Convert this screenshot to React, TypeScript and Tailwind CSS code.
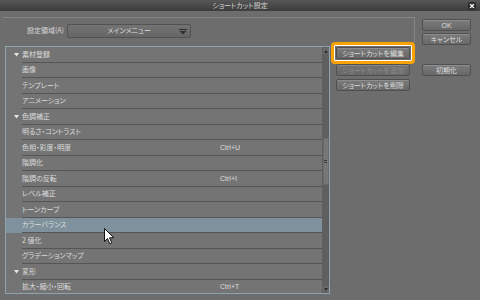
import React from 'react';

interface Row {
  label: string;
  header?: boolean;
  shortcut?: string;
  selected?: boolean;
}

const rows: Row[] = [
  { label: '素材登録', header: true },
  { label: '画像' },
  { label: 'テンプレート' },
  { label: 'アニメーション' },
  { label: '色調補正', header: true },
  { label: '明るさ・コントラスト' },
  { label: '色相・彩度・明度', shortcut: 'Ctrl+U' },
  { label: '階調化' },
  { label: '階調の反転', shortcut: 'Ctrl+I' },
  { label: 'レベル補正' },
  { label: 'トーンカーブ' },
  { label: 'カラーバランス', selected: true },
  { label: '2 値化' },
  { label: 'グラデーションマップ' },
  { label: '変形', header: true },
  { label: '拡大・縮小・回転', shortcut: 'Ctrl+T' },
];

// plain gray dialog button
const Btn = ({ label, disabled, className = '' }: { label: string; disabled?: boolean; className?: string }) => (
  <div
    className={`h-[12px] flex items-center justify-center rounded-[2px] border border-[#505050] bg-gradient-to-b from-[#7c7c7c] to-[#686868] shadow-[inset_0_1px_0_rgba(255,255,255,0.15)] text-[7px] leading-none [font-feature-settings:'palt'] ${
      disabled ? 'text-[#8c8c8c] border-[#6a6a6a] from-[#727272] to-[#6c6c6c]' : 'text-[#dedede]'
    } ${className}`}
  >
    {label}
  </div>
);

const App: React.FC = () => {
  return (
    <div className="w-[480px] h-[300px] relative overflow-hidden flex flex-col bg-[#6d6d6d] font-['Noto_Sans_CJK_JP','Noto_Sans',sans-serif] text-[#dcdcdc] antialiased">
      {/* Title bar */}
      <div className="h-[11px] relative flex items-center justify-center bg-gradient-to-b from-[#575757] to-[#3c3c3c]">
        <span className="text-[7px] leading-none text-[#d2d2d2] [font-feature-settings:'palt']">ショートカット設定</span>
        <div className="absolute right-[4px] top-[2px] w-[8px] h-[8px] rounded-[2px] bg-[#262626] flex items-center justify-center">
          <svg width="6" height="6" viewBox="0 0 6 6">
            <path d="M1 1L5 5M5 1L1 5" stroke="#f0f0f0" strokeWidth="1.4" />
          </svg>
        </div>
      </div>

      <div className="flex flex-1">
        {/* Left side */}
        <div className="w-[415px] flex flex-col pl-[3px]">
          {/* Setting area panel */}
          <div className="mt-[6px] h-[26px] border-t border-r border-[#858585] flex items-center pl-[24px] gap-[3px]">
            <span className="text-[7px] leading-none text-[#d8d8d8] [font-feature-settings:'palt']">設定領域(A)</span>
            <div className="w-[124px] h-[14px] flex items-center relative rounded-[2px] border border-[#525252] bg-gradient-to-b from-[#737373] to-[#666666]">
              <span className="flex-1 text-center text-[7px] leading-none text-[#dcdcdc] [font-feature-settings:'palt']">メインメニュー</span>
              <svg className="absolute right-[3px] top-[4px]" width="8" height="6" viewBox="0 0 8 6">
                <rect x="0" y="0" width="8" height="1" fill="#2e2e2e" />
                <path d="M0.5 2H7.5L4 5.5Z" fill="#2e2e2e" />
              </svg>
            </div>
          </div>

          <div className="flex mt-[3px] pl-[2px]">
            {/* Shortcut list */}
            <div className="w-[325px] h-[248px] border border-[#8ea3b0] flex bg-[#747474]">
              <div className="flex-1 overflow-hidden">
                {rows.map((r) => (
                  <div key={r.label} className={`h-[15.5px] flex ${r.selected ? 'bg-[#7e919c]' : ''}`}>
                    <div className="w-[16px] flex items-center justify-end pr-[3px]">
                      {r.header && (
                        <svg width="5" height="4" viewBox="0 0 5 4">
                          <path d="M0 0H5L2.5 3.5Z" fill="#e6e6e6" />
                        </svg>
                      )}
                    </div>
                    <div className="flex-1 flex items-center border-b border-[#555555]">
                      <span className="w-[198px] text-[7px] leading-none text-[#dcdcdc] [font-feature-settings:'palt']">{r.label}</span>
                      {r.shortcut && (
                        <span className="text-[7px] leading-none text-[#dcdcdc] font-['Liberation_Sans',sans-serif]">{r.shortcut}</span>
                      )}
                    </div>
                  </div>
                ))}
              </div>
              {/* Scrollbar */}
              <div className="w-[7px] bg-[#5f5f5f] flex flex-col items-center">
                <div className="mt-[1px] w-[6px] h-[6px] flex items-center justify-center bg-[#6a6a6a]">
                  <svg width="4" height="3" viewBox="0 0 4 3">
                    <path d="M0 3H4L2 0Z" fill="#2e2e2e" />
                  </svg>
                </div>
                <div className="mt-[84px] w-[6px] h-[47px] bg-[#777777] border border-[#6a6a6a] flex items-center justify-center">
                  <div className="w-[3px] h-[3px] border-y border-[#3a3a3a]" />
                </div>
                <div className="mt-auto mb-[1px] w-[6px] h-[6px] flex items-center justify-center bg-[#6a6a6a]">
                  <svg width="4" height="3" viewBox="0 0 4 3">
                    <path d="M0 0H4L2 3Z" fill="#2e2e2e" />
                  </svg>
                </div>
              </div>
            </div>

            {/* Edit buttons */}
            <div className="ml-[6px] w-[74px] flex flex-col pt-[1px]">
              <div className="relative">
                <span className="absolute -inset-[5px] rounded-[4px] border-[3px] border-[#f7a200] shadow-[inset_0_0_0_1px_#ffffff]" />
                <Btn label="ショートカットを編集" />
              </div>
              <Btn label="ショートカットを追加" disabled className="mt-[5px]" />
              <Btn label="ショートカットを削除" className="mt-[3px]" />
            </div>
          </div>
        </div>

        {/* Right side */}
        <div className="ml-[7px] w-[49px] flex flex-col pt-[8px]">
          <Btn label="OK" className="font-['Liberation_Sans',sans-serif]" />
          <Btn label="キャンセル" className="mt-[2px]" />
          <Btn label="初期化" className="mt-[19px]" />
        </div>
      </div>

      {/* Mouse pointer */}
      <svg className="absolute left-[104px] top-[228px]" width="11" height="17" viewBox="0 0 11 17">
        <path d="M0.5 0.5V13.5L3.5 10.5L5.8 15.8L7.8 14.9L5.6 9.8H9.8Z" fill="#ffffff" stroke="#111111" strokeWidth="1" strokeLinejoin="round" />
      </svg>
    </div>
  );
};

export default App;
